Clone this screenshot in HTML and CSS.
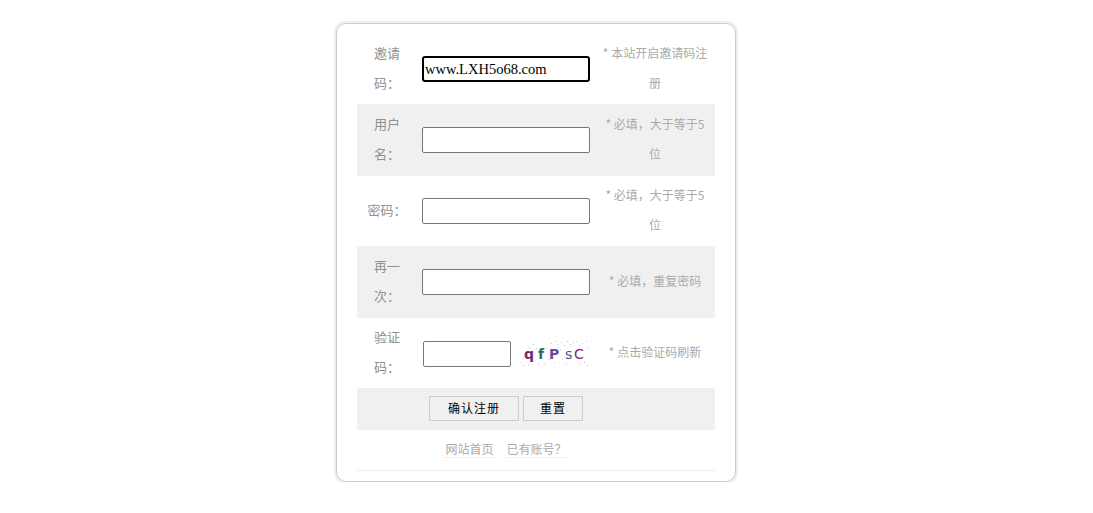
FILE: index.html
```html
<!DOCTYPE html>
<html lang="zh-CN">
<head>
  <meta charset="UTF-8" />
  <title>用户注册</title>
  <link rel="stylesheet" href="styles.css">
</head>
<body>

  <div class="reg-box">
    <form>
      <table class="reg-table">
        <colgroup>
          <col class="col-label">
          <col class="col-field">
          <col class="col-hint">
        </colgroup>
        <tr>
          <td class="label">邀请码：</td>
          <td><input type="text" class="text-input focused" value="www.LXH5o68.com"></td>
          <td class="hint">* 本站开启邀请码注册</td>
        </tr>
        <tr class="grey">
          <td class="label">用户名：</td>
          <td><input type="text" class="text-input"></td>
          <td class="hint">* 必填，大于等于5位</td>
        </tr>
        <tr>
          <td class="label">密码：</td>
          <td><input type="password" class="text-input"></td>
          <td class="hint">* 必填，大于等于5位</td>
        </tr>
        <tr class="grey">
          <td class="label">再一次：</td>
          <td><input type="password" class="text-input"></td>
          <td class="hint">* 必填，重复密码</td>
        </tr>
        <tr>
          <td class="label">验证码：</td>
          <td>
            <div class="captcha-row">
              <input type="text" class="text-input captcha-input">
              <svg class="captcha" width="70" height="28" viewBox="0 0 70 28">
                <g fill="#c9c3dc">
                  <rect x="3" y="18" width="1" height="1"/><rect x="5" y="13" width="1" height="1"/>
                  <rect x="1" y="23" width="1" height="1"/><rect x="9" y="8" width="1" height="1"/>
                  <rect x="13" y="5" width="1" height="1"/><rect x="16" y="9" width="1" height="1"/>
                  <rect x="31" y="4" width="1" height="1"/><rect x="35" y="2" width="1" height="1"/>
                  <rect x="38" y="5" width="1" height="1"/><rect x="41" y="3" width="1" height="1"/>
                  <rect x="44" y="6" width="1" height="1"/><rect x="47" y="2" width="1" height="1"/>
                  <rect x="50" y="5" width="1" height="1"/><rect x="53" y="3" width="1" height="1"/>
                  <rect x="56" y="2" width="1" height="1"/><rect x="59" y="6" width="1" height="1"/>
                  <rect x="62" y="4" width="1" height="1"/><rect x="66" y="2" width="1" height="1"/>
                  <rect x="67" y="8" width="1" height="1"/><rect x="64" y="23" width="1" height="1"/>
                  <rect x="67" y="26" width="1" height="1"/><rect x="60" y="25" width="1" height="1"/>
                  <rect x="24" y="24" width="1" height="1"/><rect x="29" y="20" width="1" height="1"/>
                  <rect x="34" y="23" width="1" height="1"/><rect x="42" y="20" width="1" height="1"/>
                  <rect x="46" y="24" width="1" height="1"/><rect x="8" y="25" width="1" height="1"/>
                  <rect x="3" y="26" width="1" height="1"/><rect x="18" y="25" width="1" height="1"/>
                  <rect x="26" y="9" width="1" height="1"/><rect x="22" y="13" width="1" height="1"/>
                  <rect x="40" y="10" width="1" height="1"/><rect x="62" y="11" width="1" height="1"/>
                </g>
                <g class="captcha-text">
                  <text x="4" y="20" fill="#6b2a6e" class="heavy">q</text>
                  <text x="18" y="20" fill="#2f6a6a" class="heavy">f</text>
                  <text x="29" y="20" fill="#6a4a9c" class="heavy">P</text>
                  <text x="45" y="20" fill="#3b5a8c">s</text>
                  <text x="54" y="20" fill="#7a2a7a">C</text>
                </g>
              </svg>
            </div>
          </td>
          <td class="hint">* 点击验证码刷新</td>
        </tr>
        <tr class="grey button-row">
          <td></td>
          <td>
            <div class="buttons">
              <button type="button" class="btn btn-submit">确认注册</button>
              <button type="reset" class="btn btn-reset">重置</button>
            </div>
          </td>
          <td></td>
        </tr>
        <tr class="link-row">
          <td></td>
          <td>
            <div class="links">
              <a>网站首页</a>
              <a>已有账号？</a>
            </div>
          </td>
          <td></td>
        </tr>
      </table>
    </form>
  </div>

</body>
</html>
```

FILE: styles.css
```css
* {
  box-sizing: border-box;
}
body {
  margin: 0;
  background-color: #fff;
  font-family: "Noto Sans CJK SC", "Liberation Sans", sans-serif;
}
.reg-box {
  width: 400px;
  height: 459px;
  margin: 23px 0 0 336px;
  padding: 10px 20px 0;
  border: 1px solid #ccc;
  border-radius: 10px;
  box-shadow: 0 0 0 2px #eee;
}
.reg-table {
  width: 358px;
  border-collapse: collapse;
  table-layout: fixed;
}
.col-label {
  width: 60px;
}
.col-field {
  width: 178px;
}
.col-hint {
  width: 120px;
}
.reg-table td {
  padding: 5px;
  line-height: 30px;
  text-align: center;
}
.grey {
  background-color: #f0f0f0;
}
.grey td {
  padding-top: 6px;
  padding-bottom: 6px;
}
.reg-table .label,
.reg-table .hint {
  padding-top: 4px;
  padding-bottom: 6px;
}
.reg-table .grey .label,
.reg-table .grey .hint {
  padding-top: 5px;
  padding-bottom: 7px;
}
.label {
  font-size: 13px;
  color: #909090;
}
.hint {
  font-size: 12px;
  color: #aaa;
}
.text-input {
  display: block;
  width: 168px;
  height: 26px;
  padding: 0 2px;
  border: 1px solid #767676;
  border-radius: 2px;
  background-color: #fff;
  font-family: "Liberation Serif", serif;
  font-size: 14.5px;
  color: #000;
}
.focused {
  border: 2px solid #000;
  border-radius: 3px;
  padding: 0 2px 0 1px;
}
.captcha-row {
  display: flex;
  align-items: center;
  gap: 9px;
  padding-left: 1px;
}
.captcha-input {
  width: 88px;
  margin-top: 2px;
}
.captcha {
  display: block;
}
.captcha-text {
  font-family: "DejaVu Sans", sans-serif;
  font-size: 14px;
}
.heavy {
  font-weight: bold;
}
.reg-table .button-row td {
  padding-top: 0;
  padding-bottom: 0;
  height: 42px;
}
.buttons {
  display: flex;
  justify-content: center;
  gap: 4px;
  margin-top: -2px;
}
.btn {
  height: 25px;
  padding: 0 0 2px;
  border: 1px solid #ccc;
  background-color: #f0f0f0;
  font-family: "Noto Sans CJK SC", sans-serif;
  font-size: 12px;
  letter-spacing: 1px;
  color: #000;
}
.btn-submit {
  width: 90px;
}
.btn-reset {
  width: 60px;
}
.link-row {
  border-bottom: 1px solid #eee;
}
.reg-table .link-row td {
  padding-top: 0;
  padding-bottom: 0;
  height: 40px;
}
.links {
  display: flex;
  justify-content: center;
  gap: 9px;
  font-size: 12px;
  color: #aaa;
}
.links a {
  padding: 0 2px;
  line-height: 16px;
  border-bottom: 1px solid #f0f0f0;
}
```
